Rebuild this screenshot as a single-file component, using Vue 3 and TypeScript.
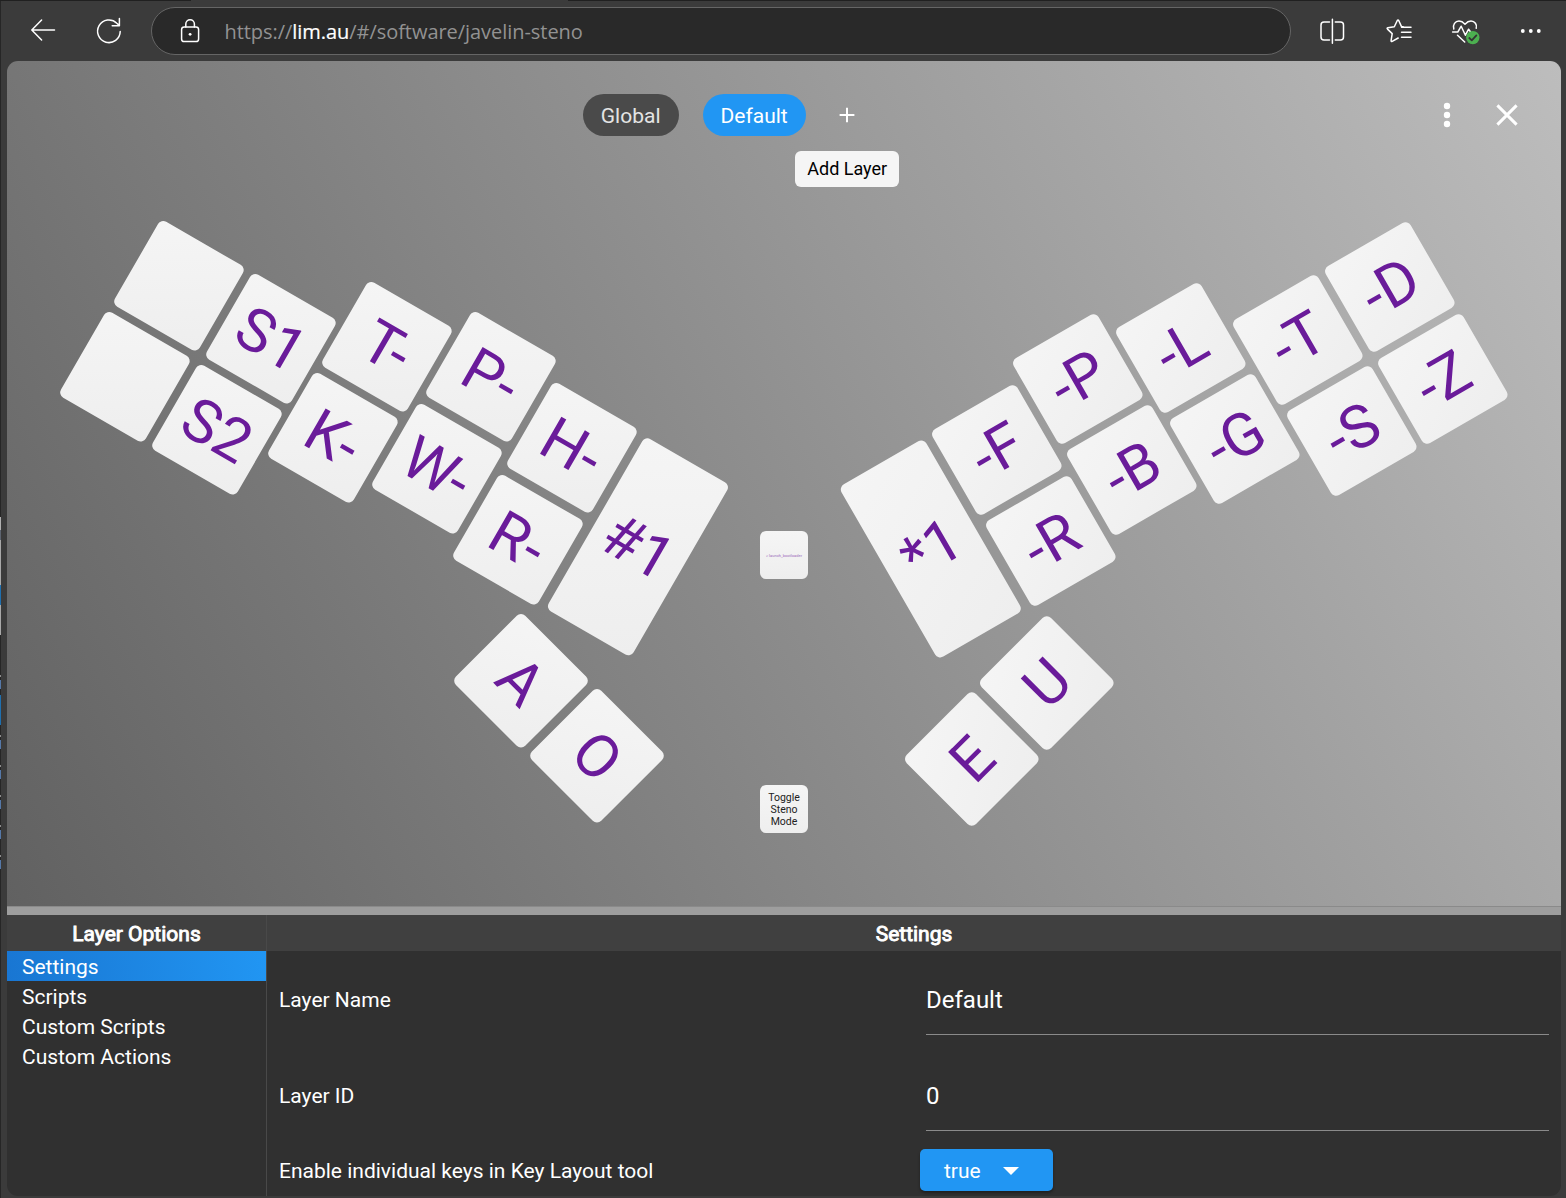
<script setup lang="ts">
interface Key {
  label: string
  x: number
  y: number
  angle: number
  tall?: boolean
}

const keys: Key[] = [
  { label: '', x: 179, y: 285.8, angle: 30 },
  { label: '', x: 125.1, y: 377, angle: 30 },
  { label: 'S1', x: 270.6, y: 338.5, angle: 30 },
  { label: 'S2', x: 216.5, y: 429.8, angle: 30 },
  { label: 'T-', x: 387.1, y: 346.5, angle: 30 },
  { label: 'K-', x: 333.2, y: 438, angle: 30 },
  { label: 'P-', x: 490.6, y: 377, angle: 30 },
  { label: 'W-', x: 437, y: 468.6, angle: 30 },
  { label: 'H-', x: 571.7, y: 448.1, angle: 30 },
  { label: 'R-', x: 518, y: 539.5, angle: 30 },
  { label: '#1', x: 637.8, y: 547.4, angle: 30, tall: true },
  { label: 'A', x: 521.4, y: 681.3, angle: 45 },
  { label: 'O', x: 596.7, y: 756.4, angle: 45 },
  { label: '*1', x: 930.5, y: 548.8, angle: -30, tall: true },
  { label: '-F', x: 996.6, y: 449.5, angle: -30 },
  { label: '-R', x: 1050.6, y: 540.9, angle: -30 },
  { label: '-P', x: 1077.9, y: 378.6, angle: -30 },
  { label: '-B', x: 1131.5, y: 469.9, angle: -30 },
  { label: '-L', x: 1181.4, y: 348.2, angle: -30 },
  { label: '-G', x: 1235.1, y: 439.4, angle: -30 },
  { label: '-T', x: 1298.2, y: 340.1, angle: -30 },
  { label: '-S', x: 1351.9, y: 431.2, angle: -30 },
  { label: '-D', x: 1389.5, y: 287.1, angle: -30 },
  { label: '-Z', x: 1443.3, y: 378.6, angle: -30 },
  { label: 'U', x: 1047.3, y: 683.4, angle: -45 },
  { label: 'E', x: 972.2, y: 758.6, angle: -45 },
]

// The board starts at (7, 61) inside the window.
const place = (k: Key) => ({
  left: `${k.x - 7}px`,
  top: `${k.y - 61}px`,
  transform: `translate(-50%, -50%) rotate(${k.angle}deg)`,
})

const options: string[] = ['Settings', 'Scripts', 'Custom Scripts', 'Custom Actions']
const selected = 'Settings'
</script>

<template>
  <div class="window">
    <div class="edge"></div>
    <header class="toolbar">
      <div class="tabline"></div>
      <svg class="ico back" width="26" height="26" viewBox="0 0 26 26"><path d="M24.500 13H2M11.600 3L1.800 13L11.600 23" /></svg>
      <svg class="ico reload" width="28" height="28" viewBox="0 0 28 28"><path d="M25.2 14.5A11.3 11.3 0 1 1 21.8 6.2L24.2 8.4M24.4 1.6V8.8H17.2" /></svg>
      <div class="address">
        <svg class="ico" width="22" height="26" viewBox="0 0 22 26">
          <rect x="2.6" y="9" width="17" height="14.6" rx="2.6" />
          <path d="M6.8 9V6a4.3 4.3 0 0 1 8.6 0v3" />
          <circle cx="11.1" cy="16.3" r="1.4" fill="#fff" stroke="none" />
        </svg>
        <span class="url">https://<b>lim.au</b>/#/software/javelin-steno</span>
      </div>
      <div class="actions">
        <svg class="ico" width="28" height="28" viewBox="0 0 28 28">
          <path d="M11.500 5H6a3 3 0 0 0-3 3v12a3 3 0 0 0 3 3h5.500M17.300 5H22.500a3 3 0 0 1 3 3v12a3 3 0 0 1-3 3h-5.200M14.400 2.300v24" />
        </svg>
        <svg class="ico" width="28" height="28" viewBox="0 0 28 28">
          <path d="M18.200 9.800L16.500 9.600L13.700 3.500Q13 2.300 12.300 3.500L9.300 9.800L2.800 10.800Q1.600 11.100 2.500 12.100L7.200 16.600L6.100 23.600Q6 24.900 7.200 24.300L13.200 21M16.500 10.300H26M16.500 15.200H26M16.500 20.300H26" />
        </svg>
        <svg class="ico heart" width="30" height="28" viewBox="0 0 30 28">
          <path d="M2.800 12C1.400 7.500 4.300 4 8 4c2.600 0 4.300 1.300 6 3.200C15.700 5.300 17.400 4 20 4c3.700 0 6.400 3.500 5.200 7.300M1.600 15h5.200l3.400-5.800 4.200 9 3.200-6 1.800 2.500M6.500 18.200L13.700 25" />
          <circle cx="21.800" cy="20.600" r="6.700" fill="#4caf50" stroke="none" />
          <path class="tick" d="M18.300 21l2.500 2.400 4.600-5" />
        </svg>
        <svg class="more" width="28" height="28" viewBox="0 0 28 28">
          <circle cx="5.800" cy="14" r="1.900" /><circle cx="13.800" cy="14" r="1.900" /><circle cx="21.800" cy="14" r="1.900" />
        </svg>
      </div>
    </header>

    <main class="page">
      <section class="board">
        <nav class="layers">
          <button class="pill">Global</button>
          <button class="pill active">Default</button>
          <button class="add">
            <svg width="16" height="16" viewBox="0 0 16 16"><path d="M8 .8v14.400M.600 8h14.800" stroke="#fff" stroke-width="2" /></svg>
            <span class="tooltip">Add Layer</span>
          </button>
        </nav>
        <div class="controls">
          <svg width="8" height="26" viewBox="0 0 8 26" fill="#fff"><circle cx="4" cy="4" r="3.200" /><circle cx="4" cy="13" r="3.200" /><circle cx="4" cy="22" r="3.200" /></svg>
          <svg width="22" height="22" viewBox="0 0 22 22"><path d="M1.400 1.400L20.600 20.600M20.600 1.400L1.400 20.600" stroke="#fff" stroke-width="3" /></svg>
        </div>
        <div v-for="(k, i) in keys" :key="i" class="key" :class="{ tall: k.tall }" :style="place(k)">{{ k.label }}</div>
        <div class="small-key boot">&gt; launch_bootloader</div>
        <div class="small-key toggle">Toggle<br />Steno<br />Mode</div>
      </section>
      <div class="splitter"></div>
      <section class="panel">
        <aside class="side">
          <h2>Layer Options</h2>
          <ul>
            <li v-for="o in options" :key="o" :class="{ selected: o === selected }">{{ o }}</li>
          </ul>
        </aside>
        <div class="settings">
          <h2>Settings</h2>
          <div class="form">
            <div class="row"><label>Layer Name</label><div class="field">Default</div></div>
            <div class="row"><label>Layer ID</label><div class="field">0</div></div>
            <div class="row short">
              <label>Enable individual keys in Key Layout tool</label>
              <button class="select">true<i class="caret"></i></button>
            </div>
          </div>
        </div>
      </section>
    </main>
  </div>
</template>

<style>
body { margin: 0; background: #3b3b3b; overflow: hidden; }
</style>

<style scoped>
.window {
  position: relative;
  box-sizing: border-box;
  width: 1566px;
  height: 1198px;
  padding: 0 5px 2px 7px;
  display: flex;
  flex-direction: column;
  background: #3b3b3b;
  font-family: Roboto, "Liberation Sans", sans-serif;
  color: #fff;
  overflow: hidden;
}
.edge {
  position: absolute;
  left: 0;
  top: 0;
  width: 1px;
  height: 1198px;
  background: linear-gradient(#262626 517px, #b0b0b0 517px 530px, #5d6470 530px 540px, #a8a8a8 540px 585px, #1f6fae 585px 605px, #a8a8a8 605px 635px, #262626 635px 675px, #8d8d8d 675px 677px, #262626 677px 680px, #5578a8 680px 689px, #262626 689px 695px, #1f6fae 695px 725px, #262626 725px 735px, #8d8d8d 735px 737px, #262626 737px 740px, #5578a8 740px 749px, #262626 749px 765px, #8d8d8d 765px 767px, #262626 767px 770px, #5578a8 770px 779px, #262626 779px 795px, #8d8d8d 795px 797px, #262626 797px 800px, #5578a8 800px 809px, #262626 809px 825px, #8d8d8d 825px 827px, #262626 827px 830px, #5578a8 830px 839px, #262626 839px 855px, #8d8d8d 855px 857px, #262626 857px 860px, #5578a8 860px 869px, #262626 869px);
}
.toolbar { height: 61px; flex: none; display: flex; align-items: flex-start; position: relative; }
.tabline {
  position: absolute;
  left: -7px;
  top: 0;
  width: 1566px;
  height: 1px;
  background: linear-gradient(90deg, #202020 191px, #3b3b3b 191px 568px, #202020 568px);
}
.ico { fill: none; stroke: #fff; stroke-width: 1.5; stroke-linecap: round; stroke-linejoin: round; flex: none; }
.back { margin: 17px 0 0 23px; }
.reload { margin: 17px 0 0 39px; }
.address {
  box-sizing: border-box;
  width: 1140px;
  height: 48px;
  margin: 7px 0 0 28px;
  padding: 0 27px;
  border: 1.5px solid #656565;
  border-radius: 24px;
  background: #292929;
  display: flex;
  align-items: center;
}
.url {
  margin-left: 23.5px;
  padding-top: 1px;
  font-family: "Open Sans", "Noto Sans", sans-serif;
  font-size: 20px;
  line-height: 46px;
  color: #929292;
  white-space: nowrap;
  letter-spacing: -0.05px;
}
.url b { font-weight: 400; color: #fff; -webkit-text-stroke: 0.2px #fff; }
.actions { display: flex; gap: 39px; margin: 16.500px 0 0 27px; }
.heart { margin-left: -1px; }
.tick { stroke: #333; stroke-width: 1.8; }
.more { fill: #fff; margin-left: -3px; }

.page { height: 1135px; flex: none; border-radius: 11px; overflow: hidden; display: flex; flex-direction: column; }
.board { position: relative; height: 845px; flex: none; background: linear-gradient(61.44deg, #616161, #bdbdbd); }
.layers { display: flex; justify-content: center; align-items: center; height: 42px; padding: 33px 130px 0 0; gap: 24px; }
button { font: inherit; color: inherit; border: 0; padding: 0; }
.pill { box-sizing: border-box; height: 42px; padding: 1px 18px 0; border-radius: 21px; background: #4a4a4a; color: #e4e4e4; font-size: 21px; line-height: 42px; }
.pill.active { background: #2196f3; color: #fff; padding: 1px 18.5px 0 18px; }
.add { position: relative; background: none; width: 16px; height: 42px; margin-left: 9px; display: flex; align-items: center; }
.tooltip {
  position: absolute;
  left: -44px;
  top: 57px;
  width: 104px;
  height: 36px;
  border-radius: 6px;
  background: #f5f5f5;
  color: #000;
  font-size: 18px;
  line-height: 36px;
  text-align: center;
}
.controls { position: absolute; right: 43px; top: 41px; display: flex; align-items: center; gap: 45px; }
.key {
  position: absolute;
  width: 98.3px;
  height: 98.3px;
  border-radius: 6px;
  background: linear-gradient(150deg, #f5f5f5, #eee);
  color: #6a1b9a;
  font-size: 60px;
  line-height: 99px;
  text-align: center;
  white-space: nowrap;
}
.tall { height: 199.3px; line-height: 200.5px; }
.small-key {
  position: absolute;
  left: 753px;
  width: 48px;
  height: 48px;
  border-radius: 6px;
  background: linear-gradient(#f5f5f5, #eee);
  text-align: center;
  white-space: nowrap;
}
.boot { top: 470px; color: #9c6abb; font-size: 4px; line-height: 49px; }
.toggle { top: 724px; box-sizing: border-box; padding-top: 7px; color: #222; font-size: 10.5px; line-height: 12px; }
.splitter { height: 9px; flex: none; background: #9e9e9e; box-sizing: border-box; border-top: 1px solid #8a8a8a; }
.panel { flex: 1; display: flex; background: #303030; }
.side { width: 259px; border-right: 1px solid #494949; }
h2 {
  box-sizing: border-box;
  margin: 0;
  height: 36px;
  padding-top: 1px;
  background: #404040;
  font-size: 21px;
  font-weight: 400;
  line-height: 37px;
  text-align: center;
  -webkit-text-stroke: 0.9px #fff;
}
ul { margin: 0; padding: 0; list-style: none; }
li { box-sizing: border-box; height: 30px; padding: 1px 0 0 15px; font-size: 21px; line-height: 31px; }
li.selected { background: linear-gradient(80deg, #1976d2, #2196f3); }
.settings { flex: 1; }
.form { padding: 1px 12px 0; }
.row { height: 96px; display: grid; grid-template-columns: 647px 1fr; align-items: center; font-size: 21px; }
.row.short { height: 52px; }
.row.short label { padding-top: 2px; }
.field { box-sizing: border-box; height: 70px; font-size: 24px; line-height: 71px; border-bottom: 1.5px solid #8a8a8a; }
.select {
  box-sizing: border-box;
  width: 133px;
  height: 42px;
  margin-left: -6px;
  padding: 2px 0 0 24px;
  border-radius: 5px;
  background: #2196f3;
  box-shadow: 0 2px 3px rgba(0, 0, 0, 0.35);
  font-size: 21px;
  display: flex;
  align-items: center;
}
.caret { margin: -1px 0 0 22px; border: 8px solid transparent; border-bottom: 0; border-top-color: #fff; }
</style>
